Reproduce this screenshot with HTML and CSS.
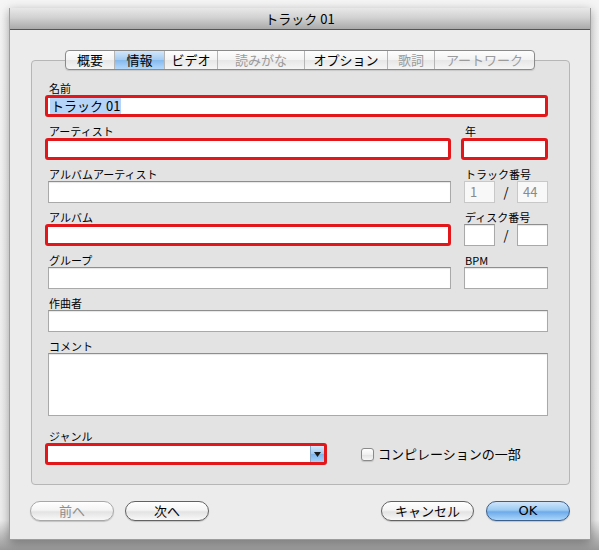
FILE: index.html
```html
<!DOCTYPE html>
<html lang="ja">
<head>
<meta charset="utf-8">
<title>トラック 01</title>
<link rel="stylesheet" href="styles.css">
</head>
<body>
<div class="screen">
  <div class="window">
    <div class="titlebar">トラック 01</div>
    <div class="body">
      <div class="tabs">
        <div class="tabbar">
          <div class="tab w48">概要</div>
          <div class="tab sel w50">情報</div>
          <div class="tab w53">ビデオ</div>
          <div class="tab dis w87">読みがな</div>
          <div class="tab w83">オプション</div>
          <div class="tab dis w47">歌詞</div>
          <div class="tab dis w100">アートワーク</div>
        </div>
      </div>
      <div class="group">
        <div class="form">
          <div class="f wide">
            <div class="lbl">名前</div>
            <div class="inp red"><span class="hl">トラック 01</span></div>
          </div>
          <div class="f">
            <div class="lbl">アーティスト</div>
            <div class="inp red"></div>
          </div>
          <div class="f">
            <div class="lbl">年</div>
            <div class="inp red"></div>
          </div>
          <div class="f">
            <div class="lbl">アルバムアーティスト</div>
            <div class="inp"></div>
          </div>
          <div class="f">
            <div class="lbl">トラック番号</div>
            <div class="pair">
              <div class="inp small dis">1</div>
              <span class="slash">/</span>
              <div class="inp small dis">44</div>
            </div>
          </div>
          <div class="f">
            <div class="lbl">アルバム</div>
            <div class="inp red"></div>
          </div>
          <div class="f">
            <div class="lbl">ディスク番号</div>
            <div class="pair">
              <div class="inp small"></div>
              <span class="slash">/</span>
              <div class="inp small"></div>
            </div>
          </div>
          <div class="f">
            <div class="lbl">グループ</div>
            <div class="inp"></div>
          </div>
          <div class="f">
            <div class="lbl">BPM</div>
            <div class="inp"></div>
          </div>
          <div class="f wide">
            <div class="lbl">作曲者</div>
            <div class="inp"></div>
          </div>
          <div class="f wide">
            <div class="lbl">コメント</div>
            <div class="inp area"></div>
          </div>
        </div>
        <div class="genre">
          <div class="f gcol">
            <div class="lbl">ジャンル</div>
            <div class="inp red combo">
              <div class="combo-text"></div>
              <div class="arrow"><svg width="7" height="5" viewBox="0 0 7 5"><path d="M0 0H7L3.5 5Z" fill="#1a1a1a"/></svg></div>
            </div>
          </div>
          <label class="check">
            <span class="box"></span>
            <span class="ctext">コンピレーションの一部</span>
          </label>
        </div>
      </div>
      <div class="buttons">
        <div class="bgroup">
          <div class="btn dis w84">前へ</div>
          <div class="btn w84">次へ</div>
        </div>
        <div class="bgroup right">
          <div class="btn w93">キャンセル</div>
          <div class="btn ok w84">OK</div>
        </div>
      </div>
    </div>
  </div>
</div>
</body>
</html>
```
FILE: styles.css
```css
* { box-sizing: border-box; }
html, body { margin: 0; padding: 0; }
body {
  width: 599px;
  height: 550px;
  overflow: hidden;
  background: linear-gradient(#f5f5f5 0, #eeeeee 520px, #b0b0b0 541px, #9a9a9a 550px);
  font-family: "Noto Sans CJK JP", "DejaVu Sans", sans-serif;
  color: #000;
}
.screen { padding: 8px 8px 0 9px; }
.window {
  width: 582px;
  border: 1px solid #9c9c9c;
  border-top: 0;
  background: #ececec;
  box-shadow: 0 3px 10px rgba(0,0,0,0.35);
}
.titlebar {
  height: 22px;
  background: linear-gradient(#e8e8e8, #d2d2d2 45%, #aaaaaa);
  border-bottom: 1px solid #555555;
  text-align: center;
  font-size: 13px;
  line-height: 21px;
}
.body { padding: 20px 20px 18px; }

.tabs { display: flex; justify-content: center; position: relative; z-index: 1; }
.tabbar {
  display: flex;
  height: 20px;
  border: 1px solid #8a8a8a;
  border-radius: 4px;
  overflow: hidden;
  background: linear-gradient(#fdfdfd, #f3f3f3 50%, #e7e7e7 51%, #f5f5f5);
  box-shadow: 0 1px 1px rgba(0,0,0,0.12);
}
.tab {
  font-size: 13px;
  line-height: 18px;
  text-align: center;
  border-left: 1px solid #b5b5b5;
  white-space: nowrap;
}
.tab:first-child { border-left: 0; }
.tab.sel { background: linear-gradient(#d3e7fb, #a2cbf2 50%, #84b9ee 51%, #b3d8fa); }
.tab.dis { color: #9b9b9b; }
.w47 { width: 47px; } .w48 { width: 48px; } .w50 { width: 50px; } .w53 { width: 53px; }
.w83 { width: 83px; } .w84 { width: 84px; } .w87 { width: 87px; } .w93 { width: 93px; } .w100 { width: 100px; }

.group {
  margin: -10px 0 0 1px;
  border: 1px solid #b6b6b6;
  border-radius: 4px;
  background: #e3e3e3;
  padding: 20px 21px 19px 16px;
}
.form {
  display: grid;
  grid-template-columns: 403px 84px;
  column-gap: 13px;
  row-gap: 7px;
}
.f { display: flex; flex-direction: column; }
.f.wide { grid-column: 1 / -1; }
.lbl {
  font-size: 11px;
  line-height: 14px;
  height: 14px;
  white-space: nowrap;
  padding-left: 1px;
}
.inp {
  height: 22px;
  background: #ffffff;
  border: 1px solid #a9a9a9;
  border-top-color: #8e8e8e;
  box-shadow: inset 0 1px 1px rgba(0,0,0,0.1);
  font-size: 13px;
  line-height: 20px;
  padding-left: 5px;
  white-space: nowrap;
}
.inp.red {
  border: 3px solid #e2171b;
  border-radius: 3px;
  margin-left: -3px;
  box-shadow: none;
  padding-left: 2px;
  line-height: 16px;
}
.hl { background: #b5d4f8; display: inline-block; line-height: 16px; padding: 0 1px; }
.pair { display: flex; align-items: center; }
.inp.small { width: 31px; }
.inp.dis { color: #8a8a8a; background: #f8f8f8; border-color: #c8c8c8; box-shadow: none; }
.slash { width: 22px; text-align: center; font-size: 13px; line-height: 22px; }
.inp.area { height: 63px; }

.genre { display: flex; align-items: flex-end; margin-top: 13px; }
.gcol { width: 279px; }
.combo { display: flex; padding: 0; }
.combo-text { flex: 1; }
.arrow {
  width: 14px;
  background: linear-gradient(#d6e9fb, #9ec9f2 50%, #7db5ec 51%, #a8d2f8);
  border-left: 1px solid #8aa8c8;
  display: flex;
  align-items: center;
  justify-content: center;
}
.check { display: flex; align-items: center; height: 22px; margin-left: 34px; }
.box {
  width: 13px;
  height: 13px;
  border: 1px solid #8a8a8a;
  border-radius: 3px;
  background: linear-gradient(#ffffff, #f0f0f0 50%, #e2e2e2 51%, #f7f7f7);
  box-shadow: 0 1px 1px rgba(0,0,0,0.15);
}
.ctext { font-size: 13px; line-height: 18px; margin-left: 4px; }

.buttons { display: flex; justify-content: space-between; margin-top: 16px; }
.bgroup { display: flex; gap: 11px; }
.bgroup.right { gap: 12px; }
.btn {
  height: 20px;
  border-radius: 10px;
  border: 1px solid #626262;
  background: linear-gradient(#ffffff, #f4f4f4 45%, #e3e3e3 55%, #f8f8f8);
  box-shadow: 0 1px 1px rgba(0,0,0,0.18);
  font-size: 13px;
  line-height: 18px;
  text-align: center;
}
.btn.dis { color: #8e8e8e; border-color: #a8a8a8; }
.btn.ok {
  border-color: #3c5f8c;
  background: linear-gradient(#cfe5fb, #9ccaf3 45%, #6eaaea 55%, #a9d6fb);
  font-family: "DejaVu Sans", sans-serif;
}
```
